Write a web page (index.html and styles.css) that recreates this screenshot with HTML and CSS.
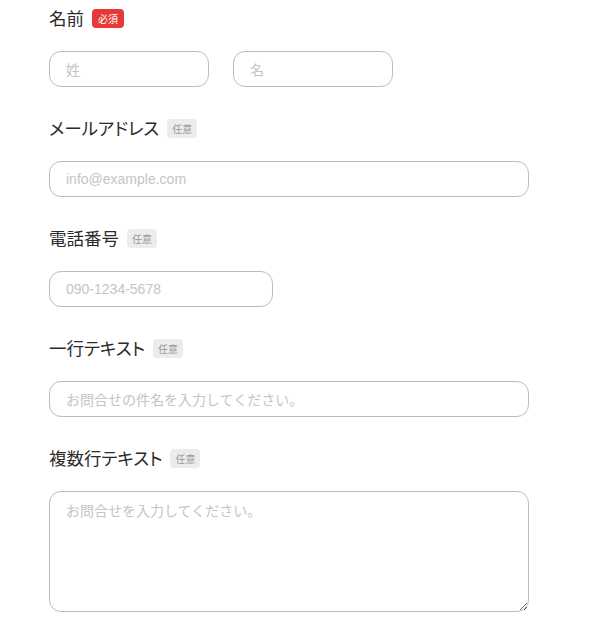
FILE: index.html
```html
<!DOCTYPE html>
<html lang="ja">
<head>
<meta charset="utf-8">
<link rel="stylesheet" href="styles.css">
</head>
<body>
<form class="form">
  <div class="field">
    <div class="label-row"><span class="label">名前</span><span class="badge badge-req">必須</span></div>
    <div class="name-row">
      <input class="input input-name" type="text" placeholder="姓">
      <input class="input input-name" type="text" placeholder="名">
    </div>
  </div>
  <div class="field">
    <div class="label-row"><span class="label">メールアドレス</span><span class="badge">任意</span></div>
    <input class="input input-full latin" type="email" placeholder="info@example.com">
  </div>
  <div class="field">
    <div class="label-row"><span class="label">電話番号</span><span class="badge">任意</span></div>
    <input class="input input-tel latin" type="tel" placeholder="090-1234-5678">
  </div>
  <div class="field">
    <div class="label-row"><span class="label">一行テキスト</span><span class="badge">任意</span></div>
    <input class="input input-full" type="text" placeholder="お問合せの件名を入力してください。">
  </div>
  <div class="field">
    <div class="label-row"><span class="label">複数行テキスト</span><span class="badge">任意</span></div>
    <textarea class="input textarea" placeholder="お問合せを入力してください。"></textarea>
  </div>
</form>
</body>
</html>
```
FILE: styles.css
```css
* { box-sizing: border-box; }
body {
  margin: 0;
  background: #fff;
  font-family: "Noto Sans CJK JP", "Noto Sans", sans-serif;
  color: #333;
}
.form {
  padding: 6px 0 0 49px;
}
.field {
  margin-bottom: 29px;
}
.label-row {
  display: flex;
  align-items: center;
  height: 24px;
  margin-bottom: 21px;
}
.label {
  font-size: 17.5px;
  line-height: 24px;
  color: #2b2b2b;
  font-feature-settings: "palt";
}
.badge {
  margin-left: 8px;
  font-size: 10px;
  line-height: 19px;
  height: 19px;
  padding: 0 5px;
  border-radius: 4px;
  background: #ececec;
  color: #999;
}
.badge-req {
  background: #e53935;
  color: #fff;
  padding: 0 6px;
}
.name-row {
  display: flex;
  gap: 24px;
}
.input {
  display: block;
  height: 36px;
  border: 1px solid #bdbdbd;
  border-radius: 12px;
  padding: 0 16px;
  font-family: "Noto Sans CJK JP", "Noto Sans", sans-serif;
  font-size: 14px;
  color: #333;
  background: #fff;
  outline: none;
}
.input::placeholder {
  color: #c4c4c4;
}
.latin {
  font-family: "Liberation Sans", Arial, sans-serif;
}
.input-name { width: 160px; }
.input-full { width: 480px; }
.input-tel { width: 224px; }
.textarea {
  width: 480px;
  height: 121px;
  padding: 8px 16px;
  line-height: 20px;
  resize: vertical;
}
```
